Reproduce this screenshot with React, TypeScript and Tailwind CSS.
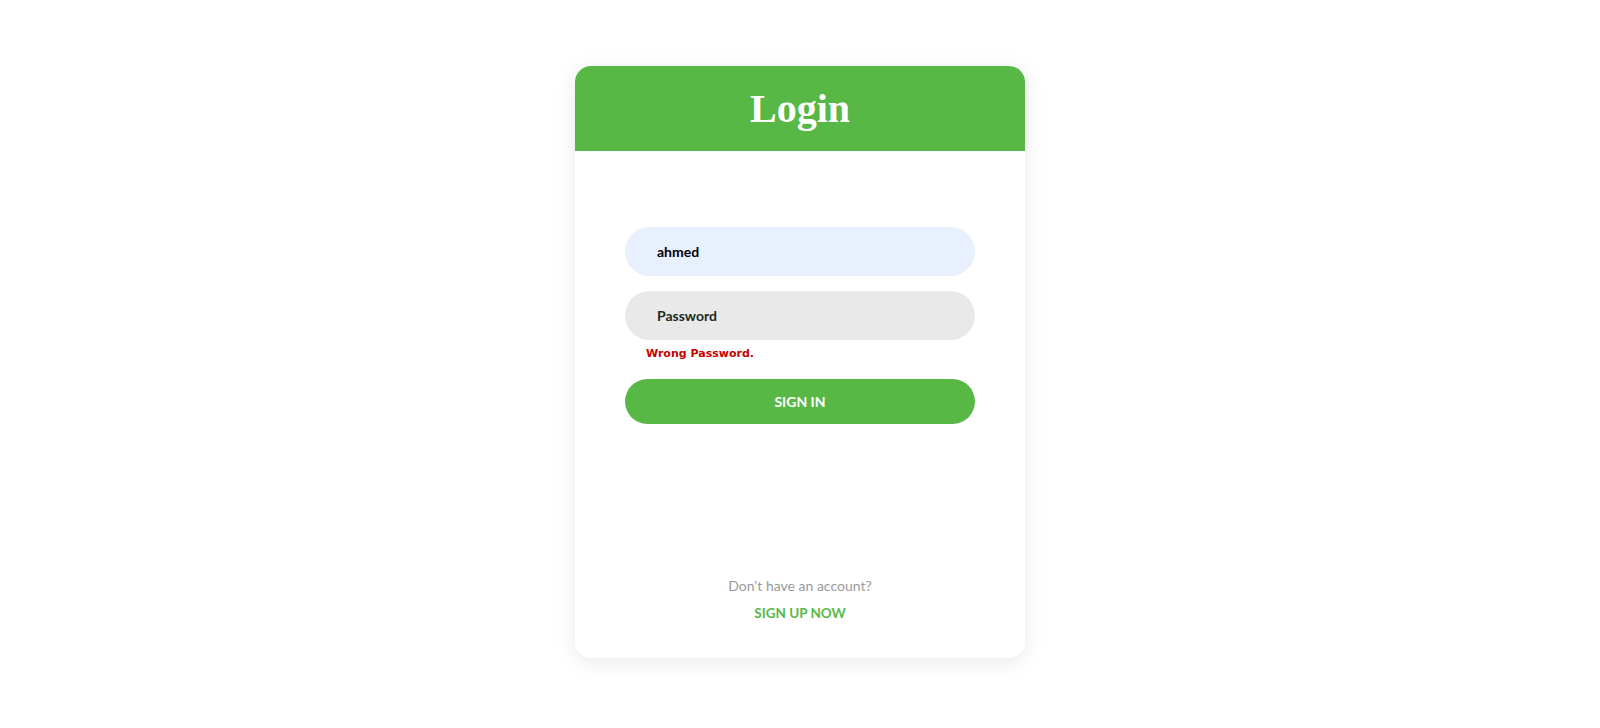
import React from 'react';

export default function App() {
  return (
    <div className="min-h-screen bg-white flex justify-center" style={{ fontFamily: 'Lato, "Open Sans", sans-serif' }}>
      <div className="mt-[66px] w-[450px] h-[592px] bg-white rounded-2xl overflow-hidden shadow-[0_4px_22px_0_rgba(0,0,0,0.09)] flex flex-col">
        <div className="h-[85px] bg-[#57b846] flex items-center justify-center">
          <h1 className="text-white text-[40px] font-bold leading-none" style={{ fontFamily: '"Liberation Serif", serif' }}>
            Login
          </h1>
        </div>

        <div className="flex-1 flex flex-col px-[50px] pt-[76px] pb-[35px]">
          <input
            type="text"
            defaultValue="ahmed"
            className="h-[49px] w-full rounded-full bg-[#e8f0fe] pl-8 pr-6 text-[14px] font-bold text-black outline-none"
          />
          <input
            type="password"
            placeholder="Password"
            className="mt-[15px] h-[49px] w-full rounded-full bg-[#e9e9e9] pl-8 pr-6 text-[14px] font-bold text-[#1c2b22] placeholder:text-[#1c2b22] outline-none"
          />
          <p
            className="mt-[5px] pl-[21px] text-[11px] leading-[18px] font-bold text-[#c80000]"
            style={{ fontFamily: '"DejaVu Sans", sans-serif' }}
          >
            Wrong Password.
          </p>
          <button className="mt-[16px] h-[45px] w-full rounded-full bg-[#57b846] text-white text-[14px] font-bold">
            SIGN IN
          </button>

          <div className="mt-auto flex flex-col items-center">
            <span className="text-[14px] leading-5 text-[#999999]">Don’t have an account?</span>
            <a href="#" className="mt-[7px] text-[13.5px] leading-5 font-bold text-[#57b846]">
              SIGN UP NOW
            </a>
          </div>
        </div>
      </div>
    </div>
  );
}
